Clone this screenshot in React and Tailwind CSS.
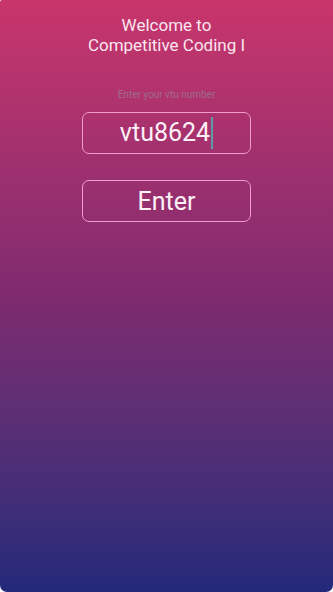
export default function App() {
  return (
    <div className="w-[333px] h-[592px] bg-white">
      <div
        className="w-full h-full flex flex-col items-center bg-gradient-to-b from-[#c9356b] via-[#7f2a6f] to-[#23297a] text-white overflow-hidden rounded-b-[7px] rounded-tl-[2px]"
        style={{ fontFamily: "Roboto, 'Noto Sans', sans-serif" }}
      >
        {/* title */}
        <div className="mt-[15px] text-center text-[17px] leading-[20px] text-[#fbe6f0]">
          <p>Welcome to</p>
          <p>Competitive Coding I</p>
        </div>

        {/* hint */}
        <p className="mt-[34px] text-[10px] leading-[12px] text-[#a06c8c]">Enter your vtu number</p>

        {/* input */}
        <div className="mt-[11px] w-[169px] h-[42px] rounded-[7px] border border-[#f19bd0] flex items-center justify-center">
          <span className="text-[25px] text-[#fdf0f6]">vtu8624</span>
          <span className="ml-[1px] w-[2px] h-[32px] bg-[#5d9aa8]"></span>
        </div>

        {/* button */}
        <button className="mt-[26px] w-[169px] h-[42px] rounded-[7px] border border-[#f19bd0] text-[25px] text-[#fdf0f6] flex items-center justify-center pt-[2px]">
          Enter
        </button>
      </div>
    </div>
  )
}
